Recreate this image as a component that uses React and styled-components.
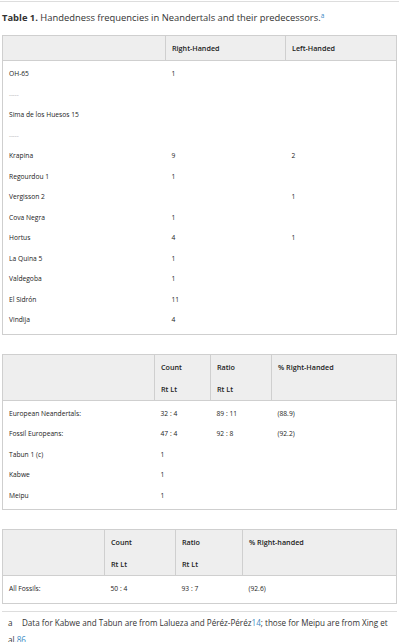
import styled, { createGlobalStyle } from 'styled-components';

const GlobalStyle = createGlobalStyle`
    body {
        margin: 0;
        background: #ffffff;
        font-family: "Open Sans", "DejaVu Sans", sans-serif;
        color: #333333;
    }
`

const neandertals = [
    ['OH-65', '1', ''],
    ['-----', '', ''],
    ['Sima de los Huesos 15', '', ''],
    ['-----', '', ''],
    ['Krapina', '9', '2'],
    ['Regourdou 1', '1', ''],
    ['Vergisson 2', '', '1'],
    ['Cova Negra', '1', ''],
    ['Hortus', '4', '1'],
    ['La Quina 5', '1', ''],
    ['Valdegoba', '1', ''],
    ['El Sidrón', '11', ''],
    ['Vindija', '4', ''],
]

const europeans = [
    ['European Neandertals:', '32 : 4', '89 : 11', '(88.9)'],
    ['Fossil Europeans:', '47 : 4', '92 : 8', '(92.2)'],
    ['Tabun 1 (c)', '1', '', ''],
    ['Kabwe', '1', '', ''],
    ['Meipu', '1', '', ''],
]

const App = () => {
    return (
        <Page>
            <GlobalStyle />
            <TopRule />
            <Caption>
                <b>Table 1.</b> Handedness frequencies in Neandertals and their predecessors.<Sup>a</Sup>
            </Caption>

            <Table>
                <colgroup>
                    <Col $w={163} />
                    <Col $w={120} />
                    <Col />
                </colgroup>
                <thead>
                    <tr>
                        <Th $h={25} />
                        <Th $h={25}>Right-Handed</Th>
                        <Th $h={25}>Left-Handed</Th>
                    </tr>
                </thead>
                <Body>
                    {neandertals.map((row, i) => (
                        <tr key={i}>
                            {row.map((cell, j) => <Td key={j} $dash={cell === '-----'}>{cell}</Td>)}
                        </tr>
                    ))}
                </Body>
            </Table>

            <Table $top={19}>
                <colgroup>
                    <Col $w={152} />
                    <Col $w={56} />
                    <Col $w={61} />
                    <Col />
                </colgroup>
                <thead>
                    <tr>
                        <Th $h={46} />
                        <Th $h={46} $stack>Count<br />Rt Lt</Th>
                        <Th $h={46} $stack>Ratio<br />Rt Lt</Th>
                        <Th $h={46} $stack>% Right-Handed</Th>
                    </tr>
                </thead>
                <Body>
                    {europeans.map((row, i) => (
                        <tr key={i}>
                            {row.map((cell, j) => <Td key={j}>{cell}</Td>)}
                        </tr>
                    ))}
                </Body>
            </Table>

            <Table $top={19}>
                <colgroup>
                    <Col $w={102} />
                    <Col $w={71} />
                    <Col $w={67} />
                    <Col />
                </colgroup>
                <thead>
                    <tr>
                        <Th $h={45} />
                        <Th $h={45} $stack>Count<br />Rt Lt</Th>
                        <Th $h={45} $stack>Ratio<br />Rt Lt</Th>
                        <Th $h={45} $stack>% Right-handed</Th>
                    </tr>
                </thead>
                <Body>
                    <tr>
                        <Td>All Fossils:</Td>
                        <Td>50 : 4</Td>
                        <Td>93 : 7</Td>
                        <Td>(92.6)</Td>
                    </tr>
                </Body>
            </Table>

            <Footnotes>
                <Note>
                    <Label>a</Label>
                    Data for Kabwe and Tabun are from Lalueza and Péréz-Péréz<Link>14</Link>; those for Meipu are from Xing et al.<Link>86</Link>
                </Note>
            </Footnotes>
        </Page>
    )
}

export default App;


const Page = styled.div`
    width: 400px;
    padding: 0 3px 0 2px;
    box-sizing: border-box;
`
const TopRule = styled.div`
    height: 1px;
    margin: 1px -2px 0 -2px;
    background: #dddddd;
`
const Caption = styled.div`
    margin-top: 10px;
    font-size: 9.4px;
    line-height: 12px;
    color: #333333;
    b {
        font-weight: 700;
    }
`
const Sup = styled.sup`
    font-size: 6.5px;
    color: #3b8bc4;
    vertical-align: 3px;
    line-height: 0;
`
const Table = styled.table`
    width: 100%;
    margin-top: ${props => props.$top ?? 11}px;
    border-collapse: collapse;
    table-layout: fixed;
    border: 1px solid #cfcfcf;
    font-size: 6.6px;
    color: #222222;
`
const Col = styled.col`
    width: ${props => props.$w ? `${props.$w}px` : 'auto'};
`
const Th = styled.th`
    height: ${props => props.$h}px;
    padding: ${props => props.$stack ? '1px 6px 0' : '0 6px'};
    box-sizing: border-box;
    background: #eeeeee;
    border-left: 1px solid #cfcfcf;
    border-bottom: 1px solid #cfcfcf;
    text-align: left;
    vertical-align: ${props => props.$stack ? 'top' : 'middle'};
    font-size: 7.2px;
    font-weight: 600;
    line-height: 22px;
    color: #222222;
    &:first-child {
        border-left: none;
    }
`
const Body = styled.tbody`
    tr:first-child td {
        padding-top: 3px;
    }
    tr:last-child td {
        padding-bottom: 3px;
    }
`
const Td = styled.td`
    height: 20.5px;
    padding: 0 6px;
    vertical-align: middle;
    line-height: 10px;
    color: ${props => props.$dash ? '#999999' : '#222222'};
    font-size: ${props => props.$dash ? '6px' : '6.7px'};
    white-space: nowrap;
`
const Footnotes = styled.div`
    margin-top: 7px;
    border-top: 1px solid #dddddd;
    padding: 2px 0 0 6px;
`
const Note = styled.div`
    font-size: 8.1px;
    line-height: 17px;
    color: #333333;
`
const Label = styled.span`
    display: inline-block;
    width: 14px;
`
const Link = styled.span`
    color: #3b8bc4;
`
